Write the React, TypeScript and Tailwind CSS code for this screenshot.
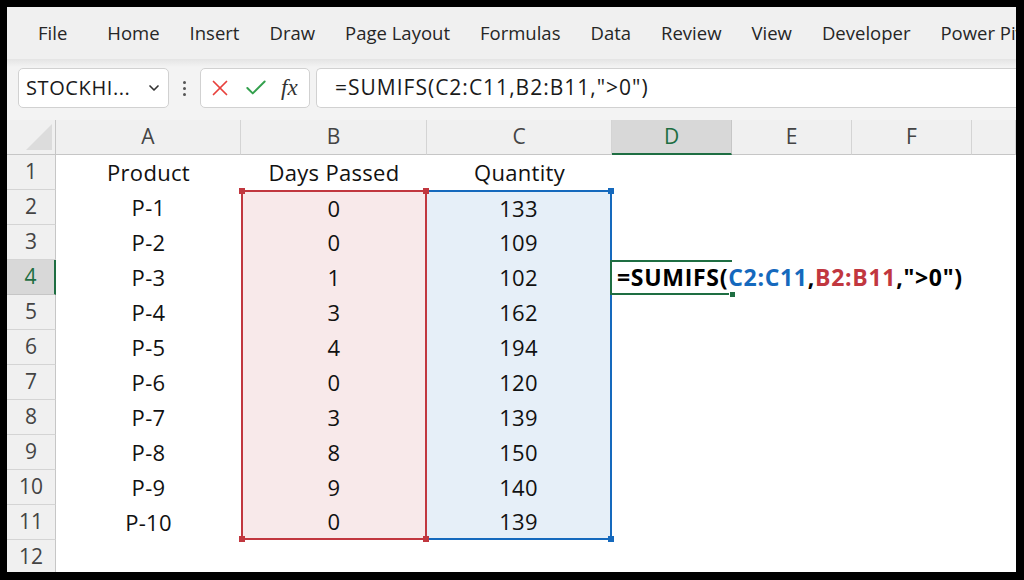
import { X, Check, ChevronDown } from "lucide-react"

const menu = ["File", "Home", "Insert", "Draw", "Page Layout", "Formulas", "Data", "Review", "View", "Developer", "Power Pivot"]

const rows = [
  ["Product", "Days Passed", "Quantity"],
  ["P-1", "0", "133"],
  ["P-2", "0", "109"],
  ["P-3", "1", "102"],
  ["P-4", "3", "162"],
  ["P-5", "4", "194"],
  ["P-6", "0", "120"],
  ["P-7", "3", "139"],
  ["P-8", "8", "150"],
  ["P-9", "9", "140"],
  ["P-10", "0", "139"],
  ["", "", ""],
]

const font = { fontFamily: '"Open Sans", "Noto Sans", sans-serif' }

export default function App() {
  return (
    <div className="w-[1024px] h-[580px] bg-black pt-[7px] pl-[7px] pr-[8px] pb-[8px] overflow-hidden" style={font}>
      <div className="w-full h-full bg-white flex flex-col overflow-hidden">
        {/* Menu tabs */}
        <div className="h-[52px] shrink-0 bg-[#f0f0f0] flex items-center pl-[31px] gap-[30px] text-[18.5px] text-[#262626] whitespace-nowrap">
          {menu.map((m, i) => (
            <span key={m} className={i === 0 ? "mr-[10px]" : ""}>
              {m}
            </span>
          ))}
        </div>
        <div className="h-[8px] shrink-0 bg-gradient-to-b from-[#e4e4e4] to-[#f3f3f3]" />

        {/* Formula bar */}
        <div className="h-[53px] shrink-0 bg-[#f3f3f3] flex items-start pl-[11px] pt-[1px]">
          <div className="w-[151px] h-[40px] bg-white border border-[#d1d1d1] rounded-[5px] flex items-center justify-between pl-[7px] pr-[6px] text-[20px] tracking-[0.6px] text-[#1a1a1a]">
            <span>STOCKHI...</span>
            <ChevronDown className="w-[16px] h-[16px] text-[#333]" strokeWidth={2.5} />
          </div>
          <div className="w-[31px] h-[40px] flex flex-col items-center justify-center gap-[3px]">
            <span className="w-[3px] h-[3px] bg-[#555] rounded-full" />
            <span className="w-[3px] h-[3px] bg-[#555] rounded-full" />
            <span className="w-[3px] h-[3px] bg-[#555] rounded-full" />
          </div>
          <div className="w-[110px] h-[40px] bg-white border border-[#d1d1d1] rounded-[5px] flex items-center pl-[6px] gap-[10px]">
            <X className="w-[26px] h-[26px] text-[#e8403c]" strokeWidth={1.6} />
            <Check className="w-[26px] h-[26px] text-[#33a04d]" strokeWidth={1.8} />
            <span className="text-[23px] italic text-[#333] ml-[2px]" style={{ fontFamily: '"Liberation Serif", serif' }}>
              fx
            </span>
          </div>
          <div className="flex-1 ml-[6px] h-[40px] bg-white border-y border-l border-[#d1d1d1] rounded-l-[5px] flex items-center pl-[18px] text-[21px] tracking-[1px] text-[#1a1a1a] whitespace-nowrap">
            =SUMIFS(C2:C11,B2:B11,"&gt;0")
          </div>
        </div>

        {/* Sheet */}
        <div className="flex-1 grid grid-cols-[49px_185px_186px_185px_120px_120px_120px_1fr] grid-rows-[35px_repeat(12,35px)] text-[#111]">
          {/* header row */}
          <div className="bg-[#f0f0f0] border-r border-b border-[#c6c6c6] flex items-end justify-end pr-[3px] pb-[4px]">
            <div className="w-0 h-0 border-l-[26px] border-l-transparent border-b-[26px] border-b-[#dcdcdc]" />
          </div>
          {["A", "B", "C"].map((c) => (
            <div key={c} className="bg-[#f0f0f0] border-r border-b border-[#d4d4d4] border-b-[#c6c6c6] flex items-center justify-center text-[21px] text-[#444]">
              {c}
            </div>
          ))}
          <div className="bg-[#d8d8d8] border-r border-[#c6c6c6] border-b-2 border-b-[#1e6e42] flex items-center justify-center text-[21px] text-[#1e6e42]">
            D
          </div>
          {["E", "F", ""].map((c, i) => (
            <div key={i} className="bg-[#f0f0f0] border-r border-b border-[#d4d4d4] border-b-[#c6c6c6] flex items-center justify-center text-[21px] text-[#444]">
              {c}
            </div>
          ))}

          {rows.map((r, i) => {
            const n = i + 1
            const inRange = n >= 2 && n <= 11
            const first = n === 2
            const last = n === 11
            return [
              <div
                key={`h${n}`}
                className={
                  n === 4
                    ? "bg-[#d8d8d8] border-r-2 border-r-[#1e6e42] border-b border-b-[#c6c6c6] flex items-center justify-center text-[21px] text-[#1e6e42]"
                    : "bg-[#f0f0f0] border-r border-r-[#c6c6c6] border-b border-b-[#d4d4d4] flex items-center justify-center text-[21px] text-[#444]"
                }
              >
                {n}
              </div>,
              <div key={`a${n}`} className="flex items-center justify-center text-[22px] tracking-[0.3px]">
                {r[0]}
              </div>,
              <div
                key={`b${n}`}
                className={
                  "relative flex items-center justify-center text-[22px] tracking-[0.3px] " +
                  (inRange ? "bg-[#f8e9ea] border-x-2 border-[#c1373f] " : "") +
                  (first ? "border-t-2 " : "") +
                  (last ? "border-b-2 " : "")
                }
              >
                {r[1]}
                {first && <span className="absolute -top-[4px] -left-[4px] w-[6px] h-[6px] bg-[#c1373f]" />}
                {first && <span className="absolute -top-[4px] -right-[4px] w-[6px] h-[6px] bg-[#c1373f] z-10" />}
                {last && <span className="absolute -bottom-[4px] -left-[4px] w-[6px] h-[6px] bg-[#c1373f]" />}
                {last && <span className="absolute -bottom-[4px] -right-[4px] w-[6px] h-[6px] bg-[#c1373f] z-10" />}
              </div>,
              <div
                key={`c${n}`}
                className={
                  "relative flex items-center justify-center text-[22px] tracking-[0.3px] " +
                  (inRange ? "bg-[#e6eff8] border-r-2 border-[#1569bd] " : "") +
                  (first ? "border-t-2 " : "") +
                  (last ? "border-b-2 " : "")
                }
              >
                {r[2]}
                {first && <span className="absolute -top-[4px] -right-[4px] w-[6px] h-[6px] bg-[#1569bd]" />}
                {last && <span className="absolute -bottom-[4px] -right-[4px] w-[6px] h-[6px] bg-[#1569bd]" />}
              </div>,
              n === 4 ? (
                <div key={`d${n}`} className="relative -ml-[2px] border-l-2 border-y-2 border-[#1e6e42] z-20 flex items-center overflow-visible">
                  <span className="ml-[4px] w-[1px] h-[27px] bg-black" />
                  <span className="ml-[1px] text-[23px] tracking-[0.7px] font-bold whitespace-nowrap text-black">
                    =SUMIFS(<span className="text-[#1569bd]">C2:C11</span>,<span className="text-[#c1373f]">B2:B11</span>,"&gt;0")
                  </span>
                  <span className="absolute -bottom-[5px] -right-[4px] w-[7px] h-[7px] bg-[#1e6e42] border border-white" />
                </div>
              ) : (
                <div key={`d${n}`} />
              ),
              <div key={`e${n}`} />,
              <div key={`f${n}`} />,
              <div key={`g${n}`} />,
            ]
          })}
        </div>
      </div>
    </div>
  )
}
